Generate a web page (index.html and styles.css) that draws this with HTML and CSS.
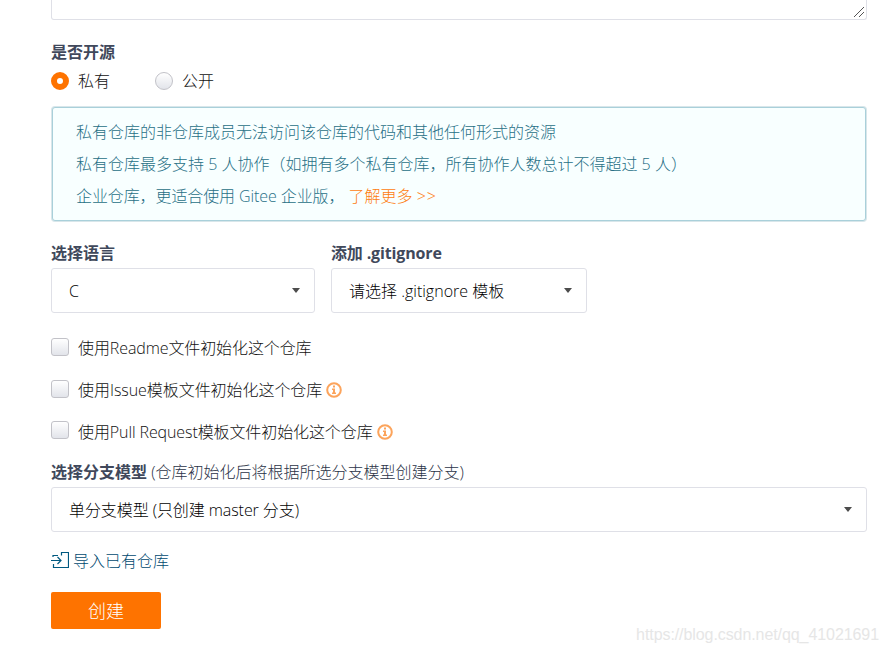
FILE: index.html
```
<!DOCTYPE html>
<html lang="zh-CN">
<head>
  <meta charset="UTF-8" />
  <meta name="viewport" content="width=device-width, initial-scale=1.0" />
  <title>新建仓库</title>
  <link rel="stylesheet" href="styles.css">
</head>
<body>
  <form class="project-form">
    <div class="description">
      <svg class="grip" width="12" height="12" viewBox="0 0 12 12"><path d="M1 11L11 1M6 11l5-5" /></svg>
    </div>

    <div class="label">是否开源</div>
    <div class="radios">
      <label class="radio"><span class="dot checked"></span>私有</label>
      <label class="radio"><span class="dot"></span>公开</label>
    </div>

    <div class="notice">
      <p>私有仓库的非仓库成员无法访问该仓库的代码和其他任何形式的资源</p>
      <p>私有仓库最多支持 5 人协作（如拥有多个私有仓库，所有协作人数总计不得超过 5 人）</p>
      <p><span class="company">企业仓库，更适合使用 Gitee 企业版，</span> <a class="more" href="#">了解更多 <span class="arrows">&gt;&gt;</span></a></p>
    </div>

    <div class="fields">
      <div class="field language">
        <div class="label">选择语言</div>
        <div class="dropdown"><span>C</span><i class="caret"></i></div>
      </div>
      <div class="field ignore">
        <div class="label">添加 .gitignore</div>
        <div class="dropdown"><span>请选择 .gitignore 模板</span><i class="caret"></i></div>
      </div>
    </div>

    <div class="checks">
      <label class="check"><span class="box"></span><span class="readme">使用Readme文件初始化这个仓库</span></label>
      <label class="check"><span class="box"></span><span class="issue">使用Issue模板文件初始化这个仓库</span>
        <svg class="info" width="16" height="16" viewBox="0 0 16 16"><circle cx="8" cy="8" r="6.8" /><path d="M7 3.5h2v2H7zM6 6.5h3v4h1V12H6v-1.500h1V8H6z" /></svg>
      </label>
      <label class="check"><span class="box"></span><span class="pull">使用Pull Request模板文件初始化这个仓库</span>
        <svg class="info" width="16" height="16" viewBox="0 0 16 16"><circle cx="8" cy="8" r="6.8" /><path d="M7 3.5h2v2H7zM6 6.5h3v4h1V12H6v-1.500h1V8H6z" /></svg>
      </label>
    </div>

    <div class="label branch-label">选择分支模型 <small>(仓库初始化后将根据所选分支模型创建分支)</small></div>
    <div class="dropdown branch"><span>单分支模型 (只创建 master 分支)</span><i class="caret"></i></div>

    <a class="import" href="#">
      <svg width="18" height="17" viewBox="0 0 18 17"><path d="M2 5V3.500h5M10.500 3.500v-3h7v15H2.500V12M0 8.500h10M6.500 5l3.500 3.500L6.500 12" /></svg>
      <span>导入已有仓库</span>
    </a>
    <button class="submit" type="button">创建</button>
  </form>
  <div class="watermark">https://blog.csdn.net/qq_41021691</div>
</body>
</html>
```

FILE: styles.css
```
* {
  box-sizing: border-box;
}

body {
  margin: 0;
  height: 653px;
  overflow: hidden;
  background: #fff;
  color: #111;
  font-family: "Open Sans", "Noto Sans CJK SC", sans-serif;
  font-size: 16px;
  font-weight: 300;
  line-height: 24px;
}

.project-form {
  width: 816px;
  margin-left: 51px;
}

.description {
  display: flex;
  justify-content: flex-end;
  align-items: flex-end;
  height: 20px;
  padding: 0 1px 1px 0;
  border: 1px solid #dfe0e7;
  border-top: 0;
  border-radius: 0 0 3px 3px;
}

.grip {
  fill: none;
  stroke: #555;
}

.label {
  height: 24px;
  color: #40485b;
  font-weight: 700;
  white-space: nowrap;
}

.description + .label {
  margin-top: 20px;
}

.label small {
  color: #2b3347;
  font-size: 16px;
  font-weight: 300;
}

.radios {
  display: flex;
  gap: 45px;
  height: 34px;
  padding-top: 5px;
}

.radio {
  display: flex;
  align-items: center;
  height: 24px;
  gap: 9px;
}

.dot {
  width: 18px;
  height: 18px;
  border: 1px solid #c2c2c8;
  border-radius: 50%;
  background: linear-gradient(#fff, #e2e4ea);
}

.dot.checked {
  border: 6px solid #fe7300;
  background: #fff;
}

.notice {
  height: 114px;
  margin: 9px 1px 0;
  padding: 8px 23px;
  border: 1px solid #a9d0da;
  border-radius: 3px;
  background: #f8ffff;
  box-shadow: 0 0 0 1px #d8e6ea;
  color: #276f86;
}

.notice p {
  margin: 0;
  line-height: 32px;
  white-space: nowrap;
}

.company {
  letter-spacing: -0.1px;
}

.more {
  color: #fe7d10;
  text-decoration: none;
}

.arrows {
  letter-spacing: 1px;
}

.fields {
  display: flex;
  gap: 16px;
  margin-top: 20px;
}

.language {
  width: 264px;
}

.ignore {
  width: 256px;
}

.ignore .label {
  letter-spacing: -0.15px;
}

.dropdown {
  display: flex;
  justify-content: space-between;
  align-items: center;
  height: 45px;
  margin-top: 3px;
  padding: 0 14px 0 17px;
  border: 1px solid #dfe0e7;
  border-radius: 3px;
  color: #000;
  white-space: nowrap;
}

.caret {
  border: 4px solid transparent;
  border-top: 5px solid #4c4c4c;
  border-bottom: 0;
}

.branch span {
  letter-spacing: -0.08px;
}

.checks {
  padding-top: 14px;
}

.check {
  display: flex;
  align-items: center;
  height: 42px;
  white-space: nowrap;
}

.box {
  width: 18px;
  height: 18px;
  margin: 0 9px 2px 0;
  border: 1px solid #c2c2c8;
  border-radius: 3px;
  background: linear-gradient(#fff, #e2e4ea);
}

.check:last-child .box {
  margin-bottom: 4px;
}

.readme,
.pull {
  letter-spacing: -0.1px;
}

.issue {
  letter-spacing: -0.05px;
}

.info {
  margin-left: 4px;
  fill: #fca45c;
}

.info circle {
  fill: none;
  stroke: #fca45c;
  stroke-width: 2;
}

.branch-label {
  margin-top: 7px;
}

.import {
  display: flex;
  align-items: center;
  gap: 4px;
  height: 24px;
  margin-top: 17px;
  color: #004a70;
  text-decoration: none;
}

.import svg {
  margin-bottom: 2px;
  fill: none;
  stroke: #005980;
  stroke-width: 1.2;
}

.submit {
  display: block;
  width: 110px;
  height: 37px;
  margin-top: 19px;
  padding: 0;
  border: 0;
  border-radius: 2px;
  background: #fe7300;
  color: #fff;
  font: inherit;
  font-size: 18px;
}

.watermark {
  position: absolute;
  right: 8px;
  bottom: 6px;
  color: #e6e6e6;
  font: 16px/24px "Liberation Sans", sans-serif;
  letter-spacing: -0.08px;
}
```
